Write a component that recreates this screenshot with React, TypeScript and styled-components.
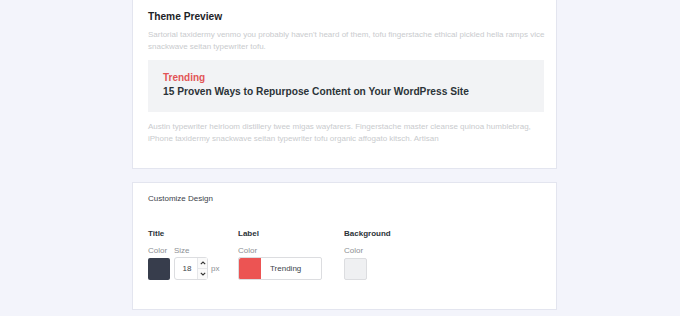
import React, { useState } from 'react';
import styled, { createGlobalStyle } from 'styled-components';

const GlobalStyle = createGlobalStyle`
  html, body {
    margin: 0;
    padding: 0;
    background: #f3f4fb;
    font-family: "Liberation Sans", Arial, sans-serif;
  }
`;

const PREVIEW_TOP =
  "Sartorial taxidermy venmo you probably haven't heard of them, tofu fingerstache ethical pickled hella ramps vice snackwave seitan typewriter tofu.";
const PREVIEW_BOTTOM =
  'Austin typewriter heirloom distillery twee migas wayfarers. Fingerstache master cleanse quinoa humblebrag, iPhone taxidermy snackwave seitan typewriter tofu organic affogato kitsch. Artisan';

const App: React.FC = () => {
  const [titleSize, setTitleSize] = useState<number>(18);
  const [labelText, setLabelText] = useState<string>('Trending');

  return (
    <>
      <GlobalStyle />
      <Page>
        <PreviewCard>
          <CardTitle>Theme Preview</CardTitle>
          <Filler>{PREVIEW_TOP}</Filler>
          <PreviewBox>
            <PreviewLabel>{labelText}</PreviewLabel>
            <PreviewHeadline>
              15 Proven Ways to Repurpose Content on Your WordPress Site
            </PreviewHeadline>
          </PreviewBox>
          <Filler>{PREVIEW_BOTTOM}</Filler>
        </PreviewCard>

        <DesignCard>
          <SectionName>Customize Design</SectionName>
          <Options>
            <OptionGroup>
              <GroupTitle>Title</GroupTitle>
              <FieldRow>
                <Field>
                  <FieldName>Color</FieldName>
                  <Swatch $color="#373d4c" />
                </Field>
                <Field>
                  <FieldName>Size</FieldName>
                  <SizeRow>
                    <NumberBox>
                      <NumberValue>{titleSize}</NumberValue>
                      <Spinner>
                        <SpinButton onClick={() => setTitleSize(titleSize + 1)}>
                          <svg width="6" height="4" viewBox="0 0 6 4">
                            <path d="M0.8 3.2 L3 1 L5.2 3.2" fill="none" stroke="#333" strokeWidth="1.1" />
                          </svg>
                        </SpinButton>
                        <SpinButton onClick={() => setTitleSize(titleSize - 1)}>
                          <svg width="6" height="4" viewBox="0 0 6 4">
                            <path d="M0.8 0.8 L3 3 L5.2 0.8" fill="none" stroke="#333" strokeWidth="1.1" />
                          </svg>
                        </SpinButton>
                      </Spinner>
                    </NumberBox>
                    <Unit>px</Unit>
                  </SizeRow>
                </Field>
              </FieldRow>
            </OptionGroup>

            <OptionGroup>
              <GroupTitle>Label</GroupTitle>
              <Field>
                <FieldName>Color</FieldName>
                <LabelInput>
                  <Swatch $color="#ec5453" $flat />
                  <LabelText
                    value={labelText}
                    onChange={(e: React.ChangeEvent<HTMLInputElement>) => setLabelText(e.target.value)}
                  />
                </LabelInput>
              </Field>
            </OptionGroup>

            <OptionGroup>
              <GroupTitle>Background</GroupTitle>
              <Field>
                <FieldName>Color</FieldName>
                <Swatch $color="#eff0f2" $bordered />
              </Field>
            </OptionGroup>
          </Options>
        </DesignCard>
      </Page>
    </>
  );
};

export default App;

const Page = styled.div`
  width: 425px;
  margin-left: 132px;
  display: flex;
  flex-direction: column;
  gap: 13px;
`;

const Card = styled.section`
  background: #ffffff;
  border: 1px solid #e3e5ef;
  box-sizing: border-box;
`;

const PreviewCard = styled(Card)`
  margin-top: -20px;
  padding: 29px 9px 22px 15px;
`;

const CardTitle = styled.h2`
  margin: 0 0 5px;
  font-size: 10.2px;
  line-height: 14px;
  font-weight: 700;
  color: #1d2327;
`;

const Filler = styled.p`
  margin: 0;
  font-size: 8px;
  line-height: 12.4px;
  color: #c9cbce;
`;

const PreviewBox = styled.div`
  margin: 6px 3px 9px 0;
  padding: 11px 15px 13px;
  background: #f2f3f5;
`;

const PreviewLabel = styled.div`
  font-size: 10px;
  line-height: 14px;
  font-weight: 700;
  color: #e25556;
`;

const PreviewHeadline = styled.div`
  font-size: 10.2px;
  line-height: 14px;
  font-weight: 700;
  color: #2c3338;
`;

const DesignCard = styled(Card)`
  padding: 10px 15px 29px;
`;

const SectionName = styled.div`
  font-size: 8px;
  line-height: 11px;
  color: #3c434a;
`;

const Options = styled.div`
  margin-top: 24px;
  display: flex;
`;

const OptionGroup = styled.div`
  display: flex;
  flex-direction: column;
  &:nth-child(1) {
    width: 90px;
  }
  &:nth-child(2) {
    width: 106px;
  }
`;

const GroupTitle = styled.div`
  font-size: 8px;
  line-height: 11px;
  font-weight: 700;
  color: #2c3338;
  margin-bottom: 6px;
`;

const FieldRow = styled.div`
  display: flex;
  gap: 4px;
`;

const Field = styled.div`
  display: flex;
  flex-direction: column;
`;

const FieldName = styled.div`
  font-size: 8px;
  line-height: 11px;
  color: #8c8f94;
  margin-bottom: 2px;
`;

const Swatch = styled.div<{ $color: string; $bordered?: boolean; $flat?: boolean }>`
  width: ${(p) => (p.$bordered ? '23px' : '22px')};
  height: 22px;
  box-sizing: border-box;
  background: ${(p) => p.$color};
  border-radius: ${(p) => (p.$flat ? '2px 0 0 2px' : '2px')};
  border: ${(p) => (p.$bordered ? '1px solid #dcdde0' : 'none')};
  flex-shrink: 0;
`;

const SizeRow = styled.div`
  display: flex;
  align-items: center;
  gap: 3px;
`;

const NumberBox = styled.div`
  width: 34px;
  height: 23px;
  box-sizing: border-box;
  border: 1px solid #dcdde0;
  border-radius: 3px;
  display: flex;
  align-items: center;
  margin-top: -1px;
`;

const NumberValue = styled.span`
  flex: 1;
  text-align: center;
  font-size: 8px;
  color: #3c434a;
  padding-left: 2px;
`;

const Spinner = styled.div`
  width: 10px;
  height: 100%;
  display: flex;
  flex-direction: column;
`;

const SpinButton = styled.button`
  flex: 1;
  padding: 0;
  border: none;
  border-left: 1px solid #e6e7ea;
  background: #fafafa;
  display: flex;
  align-items: center;
  justify-content: center;
  cursor: pointer;
  &:first-child {
    border-bottom: 1px solid #e6e7ea;
  }
`;

const Unit = styled.span`
  font-size: 8px;
  color: #8c8f94;
`;

const LabelInput = styled.div`
  width: 84px;
  height: 23px;
  box-sizing: border-box;
  border: 1px solid #dcdde0;
  border-radius: 2px;
  display: flex;
  margin-top: -1px;
  overflow: hidden;
`;

const LabelText = styled.input`
  flex: 1;
  min-width: 0;
  border: none;
  outline: none;
  padding: 0 0 0 9px;
  font-family: "Liberation Sans", Arial, sans-serif;
  font-size: 8px;
  color: #3c434a;
  background: transparent;
`;
